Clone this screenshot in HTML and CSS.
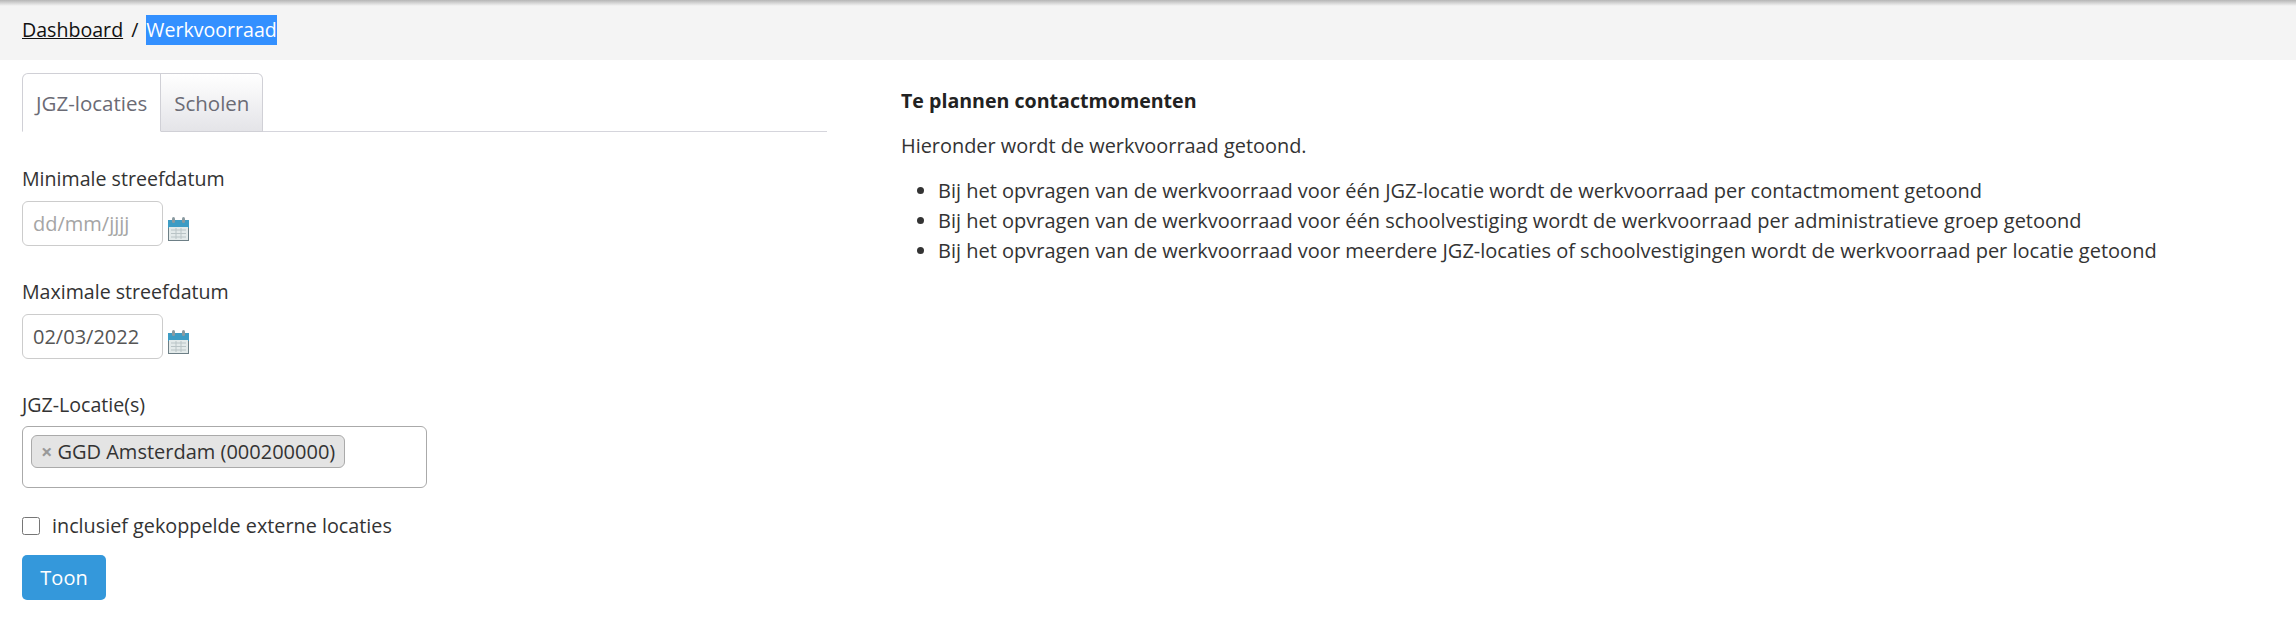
FILE: index.html
```html
<!DOCTYPE html>
<html lang="nl">
<head>
  <meta charset="UTF-8" />
  <title>Werkvoorraad</title>
  <link rel="stylesheet" href="styles.css">
</head>
<body>

  <!-- Breadcrumb -->
  <div class="crumbs">
    <a href="#">Dashboard</a>
    <span class="crumb-sep">/</span>
    <span class="crumb-current">Werkvoorraad</span>
  </div>

  <div class="content">
    <!-- Filter form -->
    <div class="filter-col">
      <div class="tabs">
        <div class="tab active">JGZ-locaties</div>
        <div class="tab">Scholen</div>
      </div>

      <form class="filters">
        <label class="field-label" for="minDate">Minimale streefdatum</label>
        <div class="date-row">
          <input class="date-input" type="text" id="minDate" placeholder="dd/mm/jjjj">
          <svg class="cal-icon" viewBox="0 0 21 24">
            <rect x="0" y="3" width="21" height="21" fill="#6d7f86"/>
            <rect x="0" y="3" width="21" height="8" fill="#3d9cc4"/>
            <rect x="1" y="10" width="19" height="13" fill="#e3eaea"/>
            <path d="M3 13h15M3 16.500h15M3 20h15M8 11v11M13 11v11" stroke="#b9c4c6" stroke-width="1"/>
            <rect x="4" y="0" width="3" height="6" rx="1.500" fill="#8a9aa0"/>
            <rect x="14" y="0" width="3" height="6" rx="1.500" fill="#8a9aa0"/>
          </svg>
        </div>

        <label class="field-label" for="maxDate">Maximale streefdatum</label>
        <div class="date-row">
          <input class="date-input" type="text" id="maxDate" value="02/03/2022">
          <svg class="cal-icon" viewBox="0 0 21 24">
            <rect x="0" y="3" width="21" height="21" fill="#6d7f86"/>
            <rect x="0" y="3" width="21" height="8" fill="#3d9cc4"/>
            <rect x="1" y="10" width="19" height="13" fill="#e3eaea"/>
            <path d="M3 13h15M3 16.500h15M3 20h15M8 11v11M13 11v11" stroke="#b9c4c6" stroke-width="1"/>
            <rect x="4" y="0" width="3" height="6" rx="1.500" fill="#8a9aa0"/>
            <rect x="14" y="0" width="3" height="6" rx="1.500" fill="#8a9aa0"/>
          </svg>
        </div>

        <div class="field-label">JGZ-Locatie(s)</div>
        <div class="multi-select">
          <span class="tag"><span class="tag-x">×</span>GGD Amsterdam (000200000)</span>
        </div>

        <label class="check-row">
          <input type="checkbox">
          <span>inclusief gekoppelde externe locaties</span>
        </label>

        <button type="button" class="btn-primary">Toon</button>
      </form>
    </div>

    <!-- Uitleg -->
    <div class="info-col">
      <h4>Te plannen contactmomenten</h4>
      <p>Hieronder wordt de werkvoorraad getoond.</p>
      <ul>
        <li>Bij het opvragen van de werkvoorraad voor één JGZ-locatie wordt de werkvoorraad per contactmoment getoond</li>
        <li>Bij het opvragen van de werkvoorraad voor één schoolvestiging wordt de werkvoorraad per administratieve groep getoond</li>
        <li>Bij het opvragen van de werkvoorraad voor meerdere JGZ-locaties of schoolvestigingen wordt de werkvoorraad per locatie getoond</li>
      </ul>
    </div>
  </div>

</body>
</html>
```

FILE: styles.css
```css
* {
  box-sizing: border-box;
}

body {
  margin: 0;
  background-color: #fff;
  color: #333;
  font-family: 'Open Sans', sans-serif;
  font-size: 20px;
  line-height: 30px;
}

.crumbs {
  height: 60px;
  padding: 15px 22px;
  background-color: #f4f4f4;
  background-image: linear-gradient(#b5b5b5, #f4f4f4 6px);
  color: #111;
  display: flex;
  font-size: 19.600px;
}

.crumbs a {
  color: #111;
  text-decoration: underline;
}

.crumb-sep {
  margin: 0 8px;
}

.crumb-current {
  background-color: #3390ff;
  color: #fff;
}

.content {
  display: grid;
  grid-template-columns: 805px 1fr;
  column-gap: 74px;
  padding: 13px 22px 0;
}

.tabs {
  display: flex;
  height: 59px;
  border-bottom: 1px solid #d5d5dc;
}

.tab {
  height: 59px;
  padding: 14px 13px 0;
  border: 1px solid #d0d0d6;
  border-left: none;
  border-radius: 0 6px 0 0;
  background-image: linear-gradient(#fff, #e4e4e8);
  color: #6b6b75;
  font-size: 20.500px;
}

.tab.active {
  border-left: 1px solid #d0d0d6;
  border-bottom-color: #fff;
  border-radius: 6px 0 0 0;
  background-image: none;
  background-color: #fff;
}

.filters {
  padding-top: 31px;
}

.field-label {
  display: block;
  padding-top: 1px;
  margin-bottom: 7px;
  font-size: 19.600px;
}

.date-row {
  display: flex;
  align-items: flex-end;
  margin-bottom: 30px;
}

.date-input {
  width: 141px;
  height: 45px;
  padding: 0 10px;
  border: 1px solid #ccc;
  border-radius: 6px;
  font: inherit;
  color: #555;
}

.date-input::placeholder {
  color: #a5a5a5;
}

.cal-icon {
  width: 21px;
  height: 24px;
  margin-left: 5px;
  margin-bottom: 5px;
}

.multi-select {
  width: 405px;
  height: 62px;
  margin-top: -1px;
  padding: 8px;
  border: 1px solid #aaa;
  border-radius: 6px;
  margin-bottom: 23px;
}

.tag {
  display: inline-block;
  height: 33px;
  line-height: 31px;
  padding: 0 9px;
  background-color: #e4e4e4;
  border: 1px solid #aaa;
  border-radius: 6px;
}

.tag-x {
  color: #999;
  font-weight: bold;
  margin-right: 5px;
}

.check-row {
  display: flex;
  align-items: center;
  gap: 12px;
  margin-bottom: 14px;
  font-size: 19.800px;
}

.check-row input {
  width: 18px;
  height: 18px;
  margin: 0;
}

.btn-primary {
  display: block;
  width: 84px;
  height: 45px;
  background-color: #3498db;
  border: none;
  border-radius: 5px;
  color: #fff;
  font: inherit;
}

.info-col {
  padding-top: 13px;
}

.info-col h4 {
  margin: 0 0 15px;
  font-size: 19.600px;
  font-weight: bold;
  color: #222;
}

.info-col p {
  margin: 0 0 15px;
  font-size: 19.900px;
}

.info-col ul {
  margin: 0;
  padding-left: 37px;
}
```
